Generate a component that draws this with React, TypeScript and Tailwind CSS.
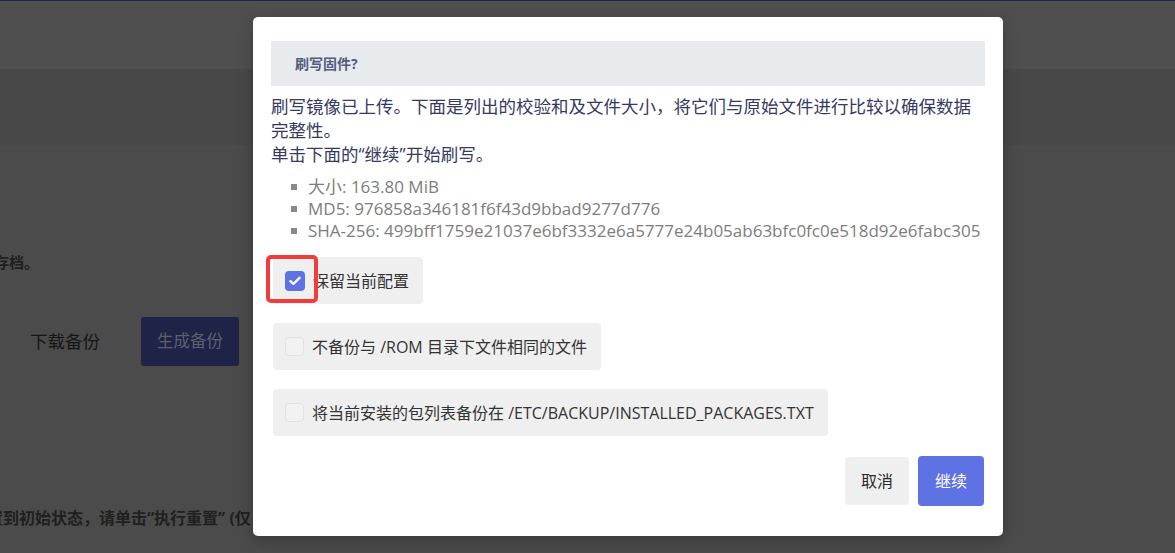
import React from 'react';

const font = { fontFamily: '"Open Sans", "Noto Sans CJK SC", sans-serif' };

function CheckRow({ label, checked }: { label: string; checked?: boolean }) {
  return (
    <div className="ml-0.5 flex w-fit items-center rounded bg-[#efefef] pl-3 pr-[14px] h-[47px]">
      {checked ? (
        <span className="relative flex h-[20px] w-[20px] items-center justify-center rounded-[4px] bg-[#5e72e4]">
          <svg width="12" height="10" viewBox="0 0 12 10" fill="none">
            <path d="M1.5 5.2 4.4 8 10.5 1.8" stroke="#fff" strokeWidth="2.4" strokeLinecap="round" strokeLinejoin="round" />
          </svg>
          <span className="pointer-events-none absolute -left-[19px] -top-[16px] h-[48px] w-[52px] rounded-[5px] border-4 border-[#f23b3b]" />
        </span>
      ) : (
        <span className="h-[19px] w-[19px] rounded-[4px] border border-[#e2e2e2] bg-[#f2f2f2]" />
      )}
      <span className="ml-[8px] text-[16px] text-[#333]">{label}</span>
    </div>
  );
}

export default function App() {
  return (
    <div className="relative h-[553px] w-[1175px] overflow-hidden bg-[#4b4b4b]" style={font}>
      {/* page behind the overlay */}
      <div className="h-[1px] bg-[#1f2350]" />
      <div className="h-[68px] bg-[#4f4f4f]" />
      <div className="h-[76px] bg-[#484848]" />
      <div className="flex flex-col overflow-hidden">
        <p className="mt-[106px] -ml-[6px] text-[15px] font-bold text-[#1f1f1f]">存档。</p>
        <div className="mt-[43px] flex items-center">
          <span className="ml-[30px] text-[17.5px] text-[#151515]">下载备份</span>
          <span className="ml-[41px] flex h-[49px] w-[98px] items-center justify-center rounded-[3px] bg-[#1f2348] text-[16.5px] text-[#5d606f]">
            生成备份
          </span>
        </div>
        <p className="mt-[140px] -ml-[13px] whitespace-nowrap text-[16px] font-bold text-[#1f1f1f]">
          置到初始状态，请单击“执行重置” (仅
        </p>
      </div>

      {/* modal */}
      <div className="absolute left-[253px] top-[17px] w-[750px] rounded-[5px] bg-white px-[18px] pb-[30px] pt-[24px] shadow-[0_4px_16px_rgba(0,0,0,0.25)]">
        <div className="flex h-[45px] items-center bg-[#e8ebee] pl-[24px]">
          <span className="text-[14px] font-bold text-[#525d7d]">刷写固件?</span>
        </div>
        <p className="mt-[8px] text-[17.5px] leading-[24px] text-[#363a60]">
          刷写镜像已上传。下面是列出的校验和及文件大小，将它们与原始文件进行比较以确保数据完整性。
          <br />
          单击下面的“继续”开始刷写。
        </p>
        <ul className="mt-[10px] flex flex-col text-[17px] leading-[22px] text-[#7d7d7d]">
          {[
            '大小: 163.80 MiB',
            'MD5: 976858a346181f6f43d9bbad9277d776',
            'SHA-256: 499bff1759e21037e6bf3332e6a5777e24b05ab63bfc0fc0e518d92e6fabc305',
          ].map((t) => (
            <li key={t} className="flex items-center whitespace-nowrap">
              <span className="ml-[20px] mr-[11px] h-[6px] w-[6px] bg-[#8a8a8a]" />
              {t}
            </li>
          ))}
        </ul>
        <div className="mt-[15px] flex flex-col gap-[19px]">
          <CheckRow label="保留当前配置" checked />
          <CheckRow label="不备份与 /ROM 目录下文件相同的文件" />
          <CheckRow label="将当前安装的包列表备份在 /ETC/BACKUP/INSTALLED_PACKAGES.TXT" />
        </div>
        <div className="mt-[20px] flex items-center justify-end gap-[9px] pr-[1px]">
          <button className="h-[48px] w-[64px] rounded-[4px] bg-[#efefef] text-[16px] text-[#2a2a2a]">取消</button>
          <button className="h-[50px] w-[66px] rounded-[4px] bg-[#5e72e4] text-[16px] text-white">继续</button>
        </div>
      </div>
    </div>
  );
}
